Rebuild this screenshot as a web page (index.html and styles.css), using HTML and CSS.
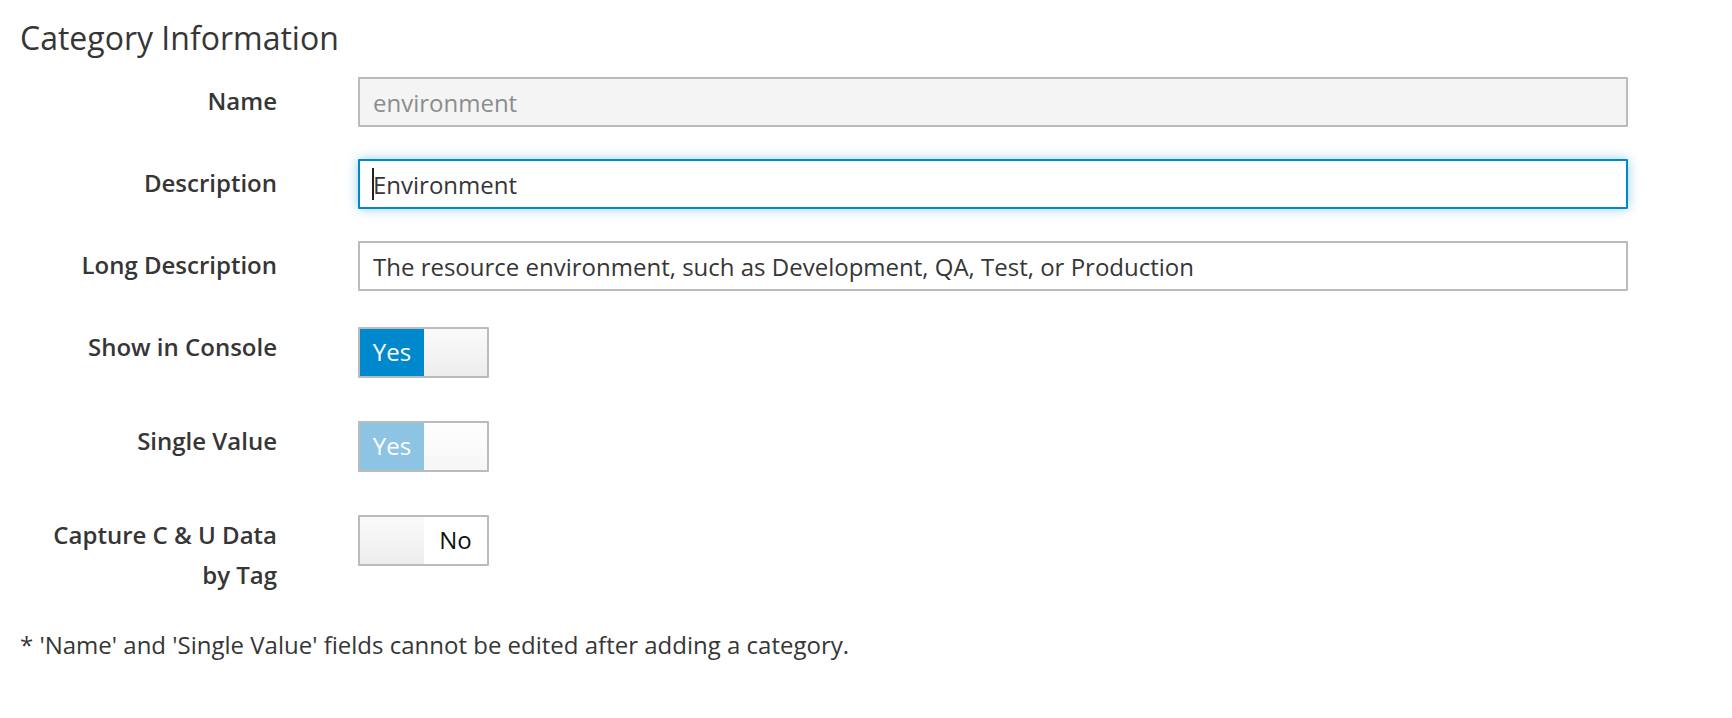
FILE: index.html
```html
<!DOCTYPE html>
<html>

<head>
    <title>Category Information</title>
    <link rel="stylesheet" href="styles.css">
</head>

<body>
    <div class="page">
        <h3 class="section-title">Category Information</h3>

        <form class="category-form">
            <div class="form-row row-text">
                <label class="row-label" for="name">Name</label>
                <input class="field" id="name" type="text" value="environment" disabled>
            </div>

            <div class="form-row row-text">
                <label class="row-label" for="description">Description</label>
                <span class="field-wrap">
                    <input class="field field-focus" id="description" type="text" value="Environment">
                    <span class="caret"></span>
                </span>
            </div>

            <div class="form-row row-text row-last-text">
                <label class="row-label" for="long-description">Long Description</label>
                <input class="field" id="long-description" type="text"
                    value="The resource environment, such as Development, QA, Test, or Production">
            </div>

            <div class="form-row row-switch">
                <span class="row-label">Show in Console</span>
                <div class="switch">
                    <span class="switch-on">Yes</span>
                    <span class="switch-handle"></span>
                </div>
            </div>

            <div class="form-row row-switch">
                <span class="row-label">Single Value</span>
                <div class="switch switch-disabled">
                    <span class="switch-on">Yes</span>
                    <span class="switch-handle"></span>
                </div>
            </div>

            <div class="form-row row-switch">
                <span class="row-label">Capture C &amp; U Data by Tag</span>
                <div class="switch">
                    <span class="switch-handle switch-handle-left"></span>
                    <span class="switch-off">No</span>
                </div>
            </div>
        </form>

        <p class="note">* 'Name' and 'Single Value' fields cannot be edited after adding a category.</p>
    </div>
</body>

</html>
```

FILE: styles.css
```css
body {
    margin: 0;
    background-color: #fff;
    color: #363636;
    font-family: 'Open Sans', 'Noto Sans', sans-serif;
    font-size: 24px;
    line-height: 40px;
}

.page {
    padding: 17px 0 0 20px;
}

.section-title {
    margin: 0 0 18px 0;
    font-size: 32px;
    font-weight: 400;
    line-height: 42px;
    color: #363636;
}

.category-form {
    display: flex;
    flex-direction: column;
}

.form-row {
    display: grid;
    grid-template-columns: 257px 1270px;
    column-gap: 81px;
    align-items: start;
}

.row-text {
    margin-bottom: 32px;
}

.row-text .row-label {
    padding-top: 4px;
}

.row-last-text {
    margin-bottom: 36px;
}

.row-switch {
    margin-bottom: 43px;
}

.row-switch:last-child {
    margin-bottom: 30px;
}

.row-label {
    padding-left: 20px;
    text-align: right;
    font-weight: 600;
    color: #363636;
}

.field {
    box-sizing: border-box;
    width: 1270px;
    height: 50px;
    margin: 0;
    padding: 0 13px;
    border: 2px solid #bbb;
    border-radius: 1px;
    background-color: #fff;
    color: #363636;
    font-family: inherit;
    font-size: 24px;
    outline: none;
}

.field:disabled {
    background-color: #f4f4f4;
    color: #8b8d8f;
}

.field-wrap {
    position: relative;
    display: block;
    width: 1270px;
}

.field-focus {
    border-color: #0088ce;
    box-shadow: 0 0 12px rgba(0, 136, 206, 0.4);
}

.caret {
    position: absolute;
    left: 14px;
    top: 9px;
    width: 2px;
    height: 32px;
    background-color: #222;
}

.switch {
    box-sizing: border-box;
    display: flex;
    width: 131px;
    height: 51px;
    border: 2px solid #bbb;
    border-radius: 1px;
    overflow: hidden;
    line-height: 45px;
    text-align: center;
}

.switch-on {
    width: 64px;
    background-color: #0088ce;
    color: #fff;
}

.switch-off {
    flex: 1;
    background-color: #fff;
    color: #111;
}

.switch-handle {
    flex: 1;
    background: linear-gradient(#fafafa, #ededed);
}

.switch-handle-left {
    flex: none;
    width: 64px;
    box-shadow: 1px 0 1px rgba(0, 0, 0, 0.08);
}

.switch-disabled .switch-on {
    background-color: #8dc4e4;
}

.switch-disabled .switch-handle {
    background: linear-gradient(#fefefe, #f6f6f6);
}

.note {
    margin: 0;
    color: #363636;
}
```
